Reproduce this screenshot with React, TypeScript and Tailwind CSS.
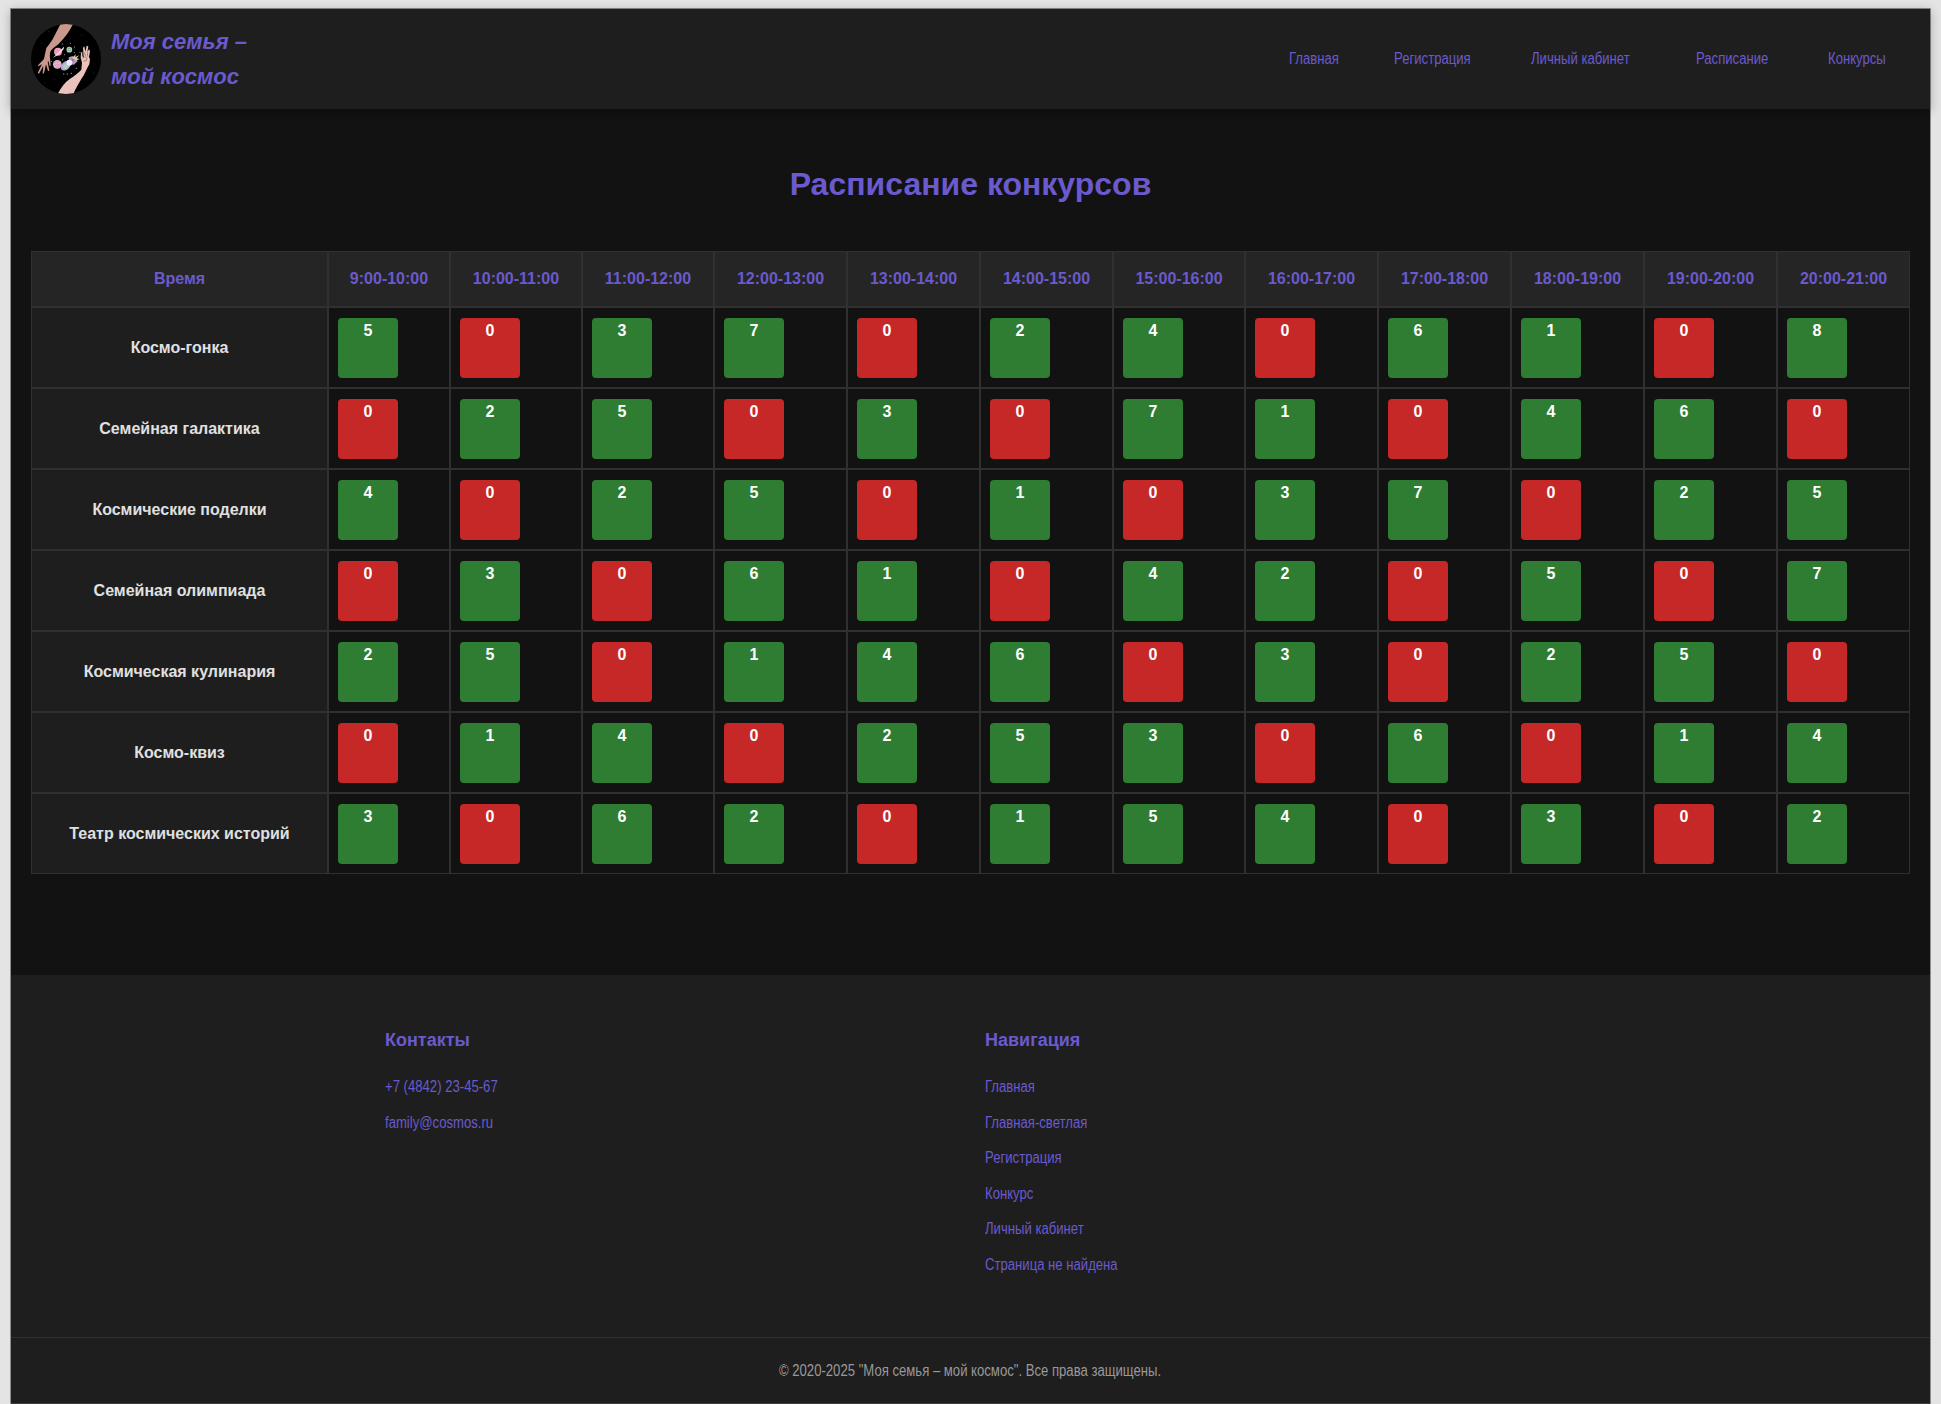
const hours = [
  '9:00-10:00', '10:00-11:00', '11:00-12:00', '12:00-13:00', '13:00-14:00', '14:00-15:00',
  '15:00-16:00', '16:00-17:00', '17:00-18:00', '18:00-19:00', '19:00-20:00', '20:00-21:00',
];

const rows: { name: string; seats: number[] }[] = [
  { name: 'Космо-гонка', seats: [5, 0, 3, 7, 0, 2, 4, 0, 6, 1, 0, 8] },
  { name: 'Семейная галактика', seats: [0, 2, 5, 0, 3, 0, 7, 1, 0, 4, 6, 0] },
  { name: 'Космические поделки', seats: [4, 0, 2, 5, 0, 1, 0, 3, 7, 0, 2, 5] },
  { name: 'Семейная олимпиада', seats: [0, 3, 0, 6, 1, 0, 4, 2, 0, 5, 0, 7] },
  { name: 'Космическая кулинария', seats: [2, 5, 0, 1, 4, 6, 0, 3, 0, 2, 5, 0] },
  { name: 'Космо-квиз', seats: [0, 1, 4, 0, 2, 5, 3, 0, 6, 0, 1, 4] },
  { name: 'Театр космических историй', seats: [3, 0, 6, 2, 0, 1, 5, 4, 0, 3, 0, 2] },
];

const columns = [
  'w-[297px]', 'w-[122px]', 'w-[132px]', 'w-[132px]', 'w-[133px]', 'w-[133px]', 'w-[133px]',
  'w-[132px]', 'w-[133px]', 'w-[133px]', 'w-[133px]', 'w-[133px]', 'w-[133px]',
];

const nav = [
  { label: 'Главная', width: 'w-[105px]' },
  { label: 'Регистрация', width: 'w-[137px]' },
  { label: 'Личный кабинет', width: 'w-[165px]' },
  { label: 'Расписание', width: 'w-[132px]' },
  { label: 'Конкурсы', width: 'w-[58px]' },
];

const footerNav = ['Главная', 'Главная-светлая', 'Регистрация', 'Конкурс', 'Личный кабинет', 'Страница не найдена'];

// Condensed link lettering
const narrow = 'block w-max origin-left scale-x-[0.82] whitespace-nowrap';

function Logo() {
  return (
    <svg viewBox="33 27 210 210" className="size-[70px] shrink-0 rounded-full">
      <rect x="33" y="27" width="210" height="210" fill="#000" />
      <path d="M122 26 L160 26 Q150 45 142 56 Q130 72 115 88 Q100 98 92 108 Q88 118 90 128 L92 152 L89 153 L85 138 L83 141 L88 167 L84 168 L78 148 L72 175 L68 176 L70 152 L57 176 L53 174 L66 148 L55 154 L54 151 L72 132 Q76 112 79 99 Q90 86 98 73 Z" fill="#c9998c" />
      <path d="M113 237 Q128 207 149 192 Q172 177 184 164 L186 143 L182 128 L183 113 L187 110 L187 124 L191 128 L189 98 L193 94 L196 110 L200 92 L205 94 L202 112 L207 103 L210 107 L207 127 L210 132 L208 148 Q203 157 199 165 Q192 181 184 192 Q173 210 165 226 L160 238 Z" fill="#ecc2bc" />
      <path d="M188 130 L195 125 L201 129 L199 137 L190 139 M193 112 L197 123 M202 112 L203 125" fill="none" stroke="#5a3f42" strokeWidth="1.5" />
      <circle cx="114" cy="110" r="12" fill="#f29bb8" />
      <path d="M99 128 Q108 119 116 111 L131 96 Q135 97 127 107 Q113 123 99 128Z" fill="#f5dfe4" />
      <circle cx="148" cy="104" r="8.5" fill="#a8d2b4" />
      <path d="M143 101 L153 99 M142 107 L154 105" stroke="#5b937c" strokeWidth="2" />
      <circle cx="112" cy="148" r="13" fill="#e6b5cb" />
      <path d="M103 143 L119 139 M102 151 L123 147 M108 157 L119 154" stroke="#c991b1" strokeWidth="2" />
      <ellipse cx="137" cy="152" rx="17" ry="12" transform="rotate(-42 137 152)" fill="#b7a2dd" />
      <path d="M146 127 L158 123 L173 139 L162 149 L147 147 Z" fill="#a997cd" />
      <circle cx="148" cy="143" r="9" fill="#f1eaff" />
      <circle cx="136" cy="155" r="7" fill="#a9d5b4" />
      <path d="M157 128 L167 118 L166 126 L178 121 L170 130 L179 132 L168 137 Z" fill="#e1cc93" />
      <path d="M154 132 L164 134 L157 139 Z" fill="#9a6573" />
      <path d="M129 177h4M140 177h4M152 175h4" stroke="#bd86a7" strokeWidth="3" />
      <g fill="#c9d8d4">
        <circle cx="127" cy="87" r="1.5" /><circle cx="151" cy="85" r="1.5" /><circle cx="163" cy="96" r="1.5" />
        <circle cx="134" cy="119" r="1.5" /><circle cx="163" cy="113" r="1.5" /><circle cx="94" cy="139" r="1.5" />
        <circle cx="128" cy="134" r="1.5" /><circle cx="180" cy="112" r="1.5" /><circle cx="169" cy="160" r="1.5" />
      </g>
      <g fill="#2e2e2e">
        <circle cx="64" cy="84" r="1.5" /><circle cx="86" cy="49" r="1.5" /><circle cx="185" cy="60" r="1.5" />
        <circle cx="74" cy="204" r="1.5" /><circle cx="103" cy="193" r="1.5" /><circle cx="221" cy="173" r="1.5" />
      </g>
    </svg>
  );
}

export default function App() {
  return (
    <div className="h-[1404px] w-[1941px] overflow-hidden bg-[#e4e4e4] pt-[9px] pl-[11px] font-['Liberation_Sans',Arial,sans-serif] text-base leading-[25.6px]">
      <div className="flex h-[1395px] w-[1919px] flex-col border-b border-[#3c3c3c] bg-[#121212] shadow-[0_0_0_1px_#8d8d8d]">
        <header className="relative flex h-[100px] shrink-0 items-center bg-[#1e1e1e] px-5 shadow-[0_2px_10px_rgba(0,0,0,0.3)]">
          <Logo />
          <p className="ml-[10px] text-[22px] leading-[35px] font-bold text-[#6a5acd] italic">
            Моя семья –<br />мой космос
          </p>
          <nav className="mr-[24px] ml-auto flex text-[#6a5acd]">
            {nav.map((item) => (
              <div key={item.label} className={item.width}>
                <a className={narrow}>{item.label}</a>
              </div>
            ))}
          </nav>
        </header>

        <main className="h-[866px] shrink-0 px-5 pt-[50px]">
          <h1 className="text-center text-[32px] leading-[51px] font-bold text-[#6a5acd]">Расписание конкурсов</h1>
          <table className="mt-[41px] w-[1879px] table-fixed border-separate border-spacing-0">
            <colgroup>
              {columns.map((width, i) => <col key={i} className={width} />)}
            </colgroup>
            <thead>
              <tr className="h-[56px]">
                {['Время', ...hours].map((label) => (
                  <th key={label} className="border border-[#303030] bg-[#252525] p-0 text-center font-bold text-[#6a5acd]">{label}</th>
                ))}
              </tr>
            </thead>
            <tbody>
              {rows.map((row) => (
                <tr key={row.name} className="h-[81px]">
                  <th className="border border-[#303030] bg-[#1e1e1e] p-0 text-center font-bold text-[#e0e0e0]">{row.name}</th>
                  {row.seats.map((count, i) => (
                    <td key={i} className="border border-[#303030] p-0 pt-[10px] pb-[9px] pl-[9px] align-top">
                      <div className={`size-[60px] rounded-[4px] text-center font-bold text-white ${count ? 'bg-[#2e7d32]' : 'bg-[#c62828]'}`}>{count}</div>
                    </td>
                  ))}
                </tr>
              ))}
            </tbody>
          </table>
        </main>

        <footer className="flex flex-1 flex-col bg-[#1e1e1e]">
          <div className="flex h-[362px] pt-[51px] pl-[374px] text-[#6a5acd]">
            <section className="w-[600px]">
              <h2 className="text-[18px] leading-[28px] font-bold">Контакты</h2>
              <ul className="mt-[20px] flex flex-col gap-[10px]">
                <li className={narrow}>+7 (4842) 23-45-67</li>
                <li className={narrow}>family@cosmos.ru</li>
              </ul>
            </section>
            <section>
              <h2 className="text-[18px] leading-[28px] font-bold">Навигация</h2>
              <ul className="mt-[20px] flex flex-col gap-[10px]">
                {footerNav.map((label) => <li key={label} className={narrow}>{label}</li>)}
              </ul>
            </section>
          </div>
          <p className="flex-1 border-t border-[#303030] pt-[20px] text-center text-[#999]">
            <span className="inline-block origin-center scale-x-[0.82]">© 2020-2025 "Моя семья – мой космос". Все права защищены.</span>
          </p>
        </footer>
      </div>
    </div>
  );
}
